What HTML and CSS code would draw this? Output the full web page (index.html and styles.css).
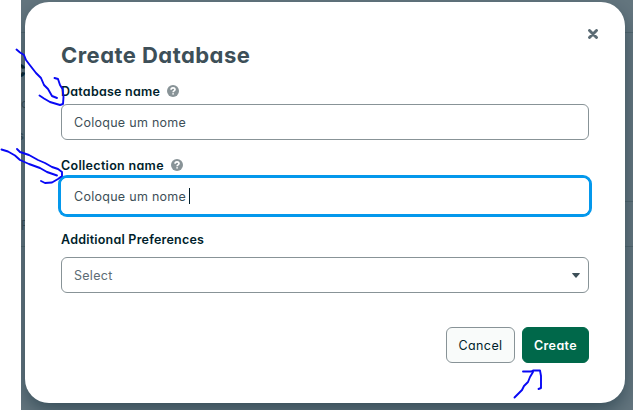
FILE: index.html
```
<!DOCTYPE html>
<html lang="en">
<head>
<meta charset="utf-8">
<title>Create Database</title>
<link rel="stylesheet" href="styles.css">
</head>
<body>
<div class="backdrop">
  <span class="rule r1"></span><span class="rule r2"></span><span class="rule r3"></span>
  <span class="behind b1">c</span><span class="behind b2">c</span><span class="behind b3">s</span><span class="behind b4">P</span>
  <main class="modal">
    <button class="close" aria-label="Close"><svg width="10" height="10" viewBox="0 0 10 10"><path d="M1.5 1.5 8.5 8.5M8.5 1.5 1.5 8.5"/></svg></button>
    <h1><span>Create Database</span></h1>
    <section class="field">
      <div class="label"><span class="t-db">Database name</span><svg class="help" viewBox="0 0 12 12"><circle cx="6" cy="6" r="6"/><path d="M4.1 4.7C4.1 2.2 8 2.2 8 4.6 8 5.9 6.1 5.8 6.1 7.2M6.1 8.3V9.6"/></svg></div>
      <div class="input"><span class="t-val">Coloque um nome</span></div>
    </section>
    <section class="field">
      <div class="label"><span class="t-col">Collection name</span><svg class="help" viewBox="0 0 12 12"><circle cx="6" cy="6" r="6"/><path d="M4.1 4.7C4.1 2.2 8 2.2 8 4.6 8 5.9 6.1 5.8 6.1 7.2M6.1 8.3V9.6"/></svg></div>
      <div class="input focused"><span class="t-val">Coloque um nome</span><i class="caret"></i></div>
    </section>
    <section class="field preferences">
      <div class="label"><span class="t-pref">Additional Preferences</span></div>
      <div class="input select"><span class="t-sel">Select</span><svg width="8" height="5" viewBox="0 0 8 5"><path d="M.6 0H7.4Q8.2 0 7.7.7L4.5 4.6Q4 5 3.5 4.6L.3.7Q-.2 0 .6 0Z"/></svg></div>
    </section>
    <footer><button class="btn cancel"><span>Cancel</span></button><button class="btn create"><span>Create</span></button></footer>
  </main>
</div>
<svg class="ink" width="633" height="410" viewBox="0 0 633 410">
  <path d="M16.5 49.5 20 52.5 24 55 26 60 29 64 36 73 41 78 44 85 48 89 52 96 57 98"/>
  <path d="M54.5 78 58 79 60 85 62.5 89 63.5 97 63 104 60 105 50 102 44 98.500 39.500 95.500"/>
  <path d="M1.500 149.500 8 151.500 15 155.500 20 160 29 164 40 168 47 172 57 175.500"/>
  <path d="M17 149 20 152 29 155 38 160 45 163 52 167 58 169 62 172 62 176 58 179 52 182.500 45 183 41 181"/>
  <path d="M514.500 397.500 519 393 522 390 524 386 528 382 530 377 533 372M523 371.500H531L533 370.500H540L541 376V386L541 388 538.500 389"/>
</svg>
</body>
</html>
```
FILE: styles.css
```
* { box-sizing: border-box; }
body {
  margin: 0;
  width: 633px;
  height: 410px;
  overflow: hidden;
  background: #fff;
  font-family: Inter, "Open Sans", sans-serif;
  font-feature-settings: "cv11";
  font-size: 12.5px;
  color: #001e2b;
}
.backdrop {
  position: relative;
  margin-left: 21px;
  padding: 2px 8px 7px 4px;
  height: 410px;
  overflow: hidden;
  background: #64767f;
}
.rule { position: absolute; left: 0; right: 0; height: 1px; background: #53676f; }
.r1 { top: 32px; }
.r2 { top: 201px; left: 300px; }
.r3 { top: 246px; }
.behind { position: absolute; line-height: 20px; color: #3d515b; }
.b1 { left: -9px; top: 59px; font-size: 24px; font-weight: 700; color: #0a2733; }
.b2 { left: 0; top: 94px; }
.b3 { left: -4px; top: 126px; font-weight: 600; }
.b4 { left: 0; top: 216px; }
.modal {
  position: relative;
  height: 401px;
  padding: 39px 36px 0;
  border-radius: 24px;
  background: #fff;
  box-shadow: 0 8px 20px -2px rgba(0, 30, 43, .5);
}
button { font: inherit; font-feature-settings: inherit; }
.close {
  position: absolute;
  top: 27px;
  right: 27px;
  width: 10px;
  height: 10px;
  padding: 0;
  border: 0;
  background: none;
}
.close svg { display: block; fill: none; stroke: #5c6c75; stroke-width: 2.9; stroke-linecap: round; }
h1 {
  margin: 0;
  height: 41px;
  font-size: 22px;
  line-height: 28px;
  font-weight: 700;
  letter-spacing: .45px;
  color: #3d4f58;
  white-space: nowrap;
}
.field { height: 74px; }
.label { display: flex; align-items: center; height: 22px; padding-bottom: 4px; font-weight: 600; white-space: nowrap; }
.t-db { letter-spacing: .24px; width: 106px; }
.t-col { letter-spacing: .31px; width: 110px; }
.t-pref { letter-spacing: .22px; }
.help { width: 12px; height: 12px; fill: #889397; }
.help path { fill: none; stroke: #fff; stroke-width: 1.7; }
.input {
  display: flex;
  align-items: center;
  height: 36px;
  padding: 0 12px;
  border: 1px solid #889397;
  border-radius: 6px;
  color: #3d4f58;
  letter-spacing: .28px;
}
.focused { border-color: #fff; box-shadow: 0 0 0 3px #0498ec; }
.caret { width: 1px; height: 16px; margin-left: 3px; background: #001e2b; }
.preferences { height: 78px; }
.preferences .label { height: 27px; padding-bottom: 9px; }
.select { justify-content: space-between; padding-right: 8px; color: #5c6c75; }
.select svg { fill: #3d4f58; }
footer { display: flex; justify-content: flex-end; gap: 7px; margin-top: 19px; }
.btn {
  height: 36px;
  width: 69px;
  padding: 0;
  border: 1px solid #889397;
  border-radius: 6px;
  background: #f9fbfa;
  color: #001e2b;
  letter-spacing: .4px;
}
.create { width: 67px; border-color: #00684a; background: #00684a; color: #fff; font-weight: 600; }
.ink { position: absolute; left: 0; top: 0; fill: none; stroke: #0808f5; stroke-width: 1.9; stroke-linecap: round; stroke-linejoin: round; }
```
